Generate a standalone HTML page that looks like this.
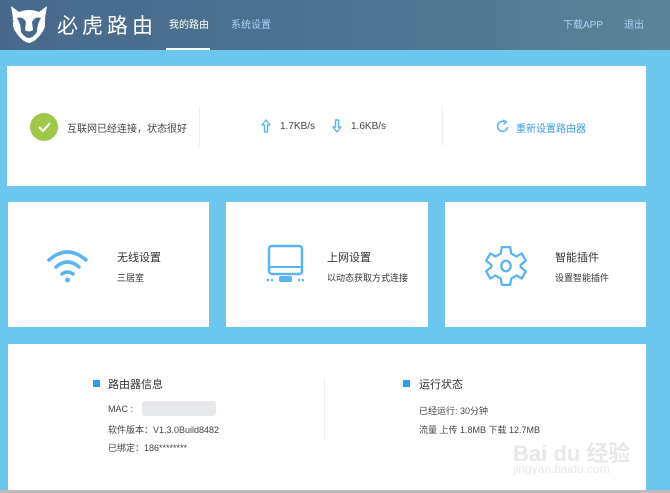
<!DOCTYPE html>
<html><head><meta charset="utf-8"><style>
*{margin:0;padding:0;box-sizing:border-box}
body{width:670px;height:493px;background:#6cc6ee;font-family:"Liberation Sans","Noto Sans CJK SC",sans-serif;position:relative;overflow:hidden;color:#333}
.hdr{position:absolute;left:0;top:0;width:670px;height:50px;background:linear-gradient(90deg,#48698c,#4f7590 60%,#5a8496)}
.p{position:absolute;background:#fff}
.t{position:absolute;white-space:nowrap}
</style></head><body>
<div class="hdr">
<svg style="position:absolute;left:7px;top:4px" width="44" height="40" viewBox="0 0 44 40">
<path d="M4 2 L12 8 Q22 4 32 8 L40 2 L38 14 Q40 22 34 30 Q28 38 22 39 Q16 38 10 30 Q4 22 6 14 Z" fill="#fff"/>
<path d="M10 14 Q16 12 19 18 L18 26 Q22 29 26 26 L25 18 Q28 12 34 14 Q30 20 30 28 Q26 34 22 34 Q18 34 14 28 Q14 20 10 14Z" fill="#48698c"/>
<path d="M5 16 Q2 28 12 38" stroke="#48698c" stroke-width="3" fill="none"/>
<path d="M39 16 Q42 28 32 38" stroke="#48698c" stroke-width="3" fill="none"/>
</svg>
<div class="t" style="left:57px;top:10px;font-size:21px;color:#fff;letter-spacing:4px">必虎路由</div>
<div class="t" style="left:169px;top:16px;font-size:10px;color:#fff">我的路由</div>
<div style="position:absolute;left:166px;top:48px;width:44px;height:2px;background:#fff"></div>
<div class="t" style="left:231px;top:16px;font-size:10px;color:#a9d3f5">系统设置</div>
<div class="t" style="left:563px;top:16px;font-size:10px;color:#a9d3f5">下载APP</div>
<div class="t" style="left:624px;top:16px;font-size:10px;color:#a9d3f5">退出</div>
</div>
<div class="p" style="left:7px;top:66px;width:639px;height:120px">
<div style="position:absolute;left:23px;top:47px;width:28px;height:28px;border-radius:50%;background:#9dc84a"></div>
<svg style="position:absolute;left:23px;top:47px" width="28" height="28"><path d="M9 14 L13 18 L20 10" stroke="#fff" stroke-width="2" fill="none"/></svg>
<div class="t" style="left:60px;top:54px;font-size:10px;color:#444">互联网已经连接，状态很好</div>
<div style="position:absolute;left:192px;top:40px;width:1px;height:40px;background:#eee"></div>
<div style="position:absolute;left:435px;top:40px;width:1px;height:40px;background:#eee"></div>
<svg style="position:absolute;left:254px;top:53px" width="10" height="14" viewBox="0 0 10 14"><path d="M5 1 L9 6 H6.5 V13 H3.5 V6 H1 Z" stroke="#5ab5ef" stroke-width="1.4" fill="none" stroke-linejoin="round"/></svg>
<div class="t" style="left:273px;top:55px;font-size:10px;color:#444">1.7KB/s</div>
<svg style="position:absolute;left:325px;top:53px" width="10" height="14" viewBox="0 0 10 14"><path d="M5 13 L9 8 H6.5 V1 H3.5 V8 H1 Z" stroke="#5ab5ef" stroke-width="1.4" fill="none" stroke-linejoin="round"/></svg>
<div class="t" style="left:344px;top:55px;font-size:10px;color:#444">1.6KB/s</div>
<svg style="position:absolute;left:489px;top:53px" width="13" height="14" viewBox="0 0 13 14"><path d="M9 3 A5 5 0 1 0 11.5 8" stroke="#5ab5ef" stroke-width="1.6" fill="none"/><path d="M7 1 L10.5 3 L7.5 5.5" stroke="#5ab5ef" stroke-width="1.4" fill="none"/></svg>
<div class="t" style="left:509px;top:54px;font-size:10px;color:#3a9be3">重新设置路由器</div>
</div>
<div class="p" style="left:8px;top:202px;width:201px;height:125px">
<svg style="position:absolute;left:38px;top:45px" width="43" height="36" viewBox="0 0 43 36"><g stroke="#5ab5ef" stroke-width="3.5" fill="none" stroke-linecap="round"><path d="M3 13 Q21.5 -3 40 13"/><path d="M10 20 Q21.5 10 33 20"/><path d="M16 27 Q21.5 23 27 27"/></g><circle cx="21.5" cy="33" r="2.5" fill="#5ab5ef"/></svg>
<div class="t" style="left:109px;top:47px;font-size:11px;color:#333">无线设置</div>
<div class="t" style="left:109px;top:69px;font-size:9px;color:#333">三居室</div>
</div>
<div class="p" style="left:226px;top:202px;width:202px;height:125px">
<svg style="position:absolute;left:40px;top:42px" width="40" height="42" viewBox="0 0 40 42"><rect x="3" y="2" width="33" height="28" rx="3" stroke="#5ab5ef" stroke-width="2.5" fill="none"/><line x1="4" y1="23" x2="35" y2="23" stroke="#5ab5ef" stroke-width="2"/><rect x="13" y="32" width="13" height="6" rx="2" fill="#5ab5ef"/><g fill="#5ab5ef"><circle cx="2" cy="36" r="1.3"/><circle cx="6" cy="36" r="1.3"/><circle cx="33" cy="36" r="1.3"/><circle cx="37" cy="36" r="1.3"/></g></svg>
<div class="t" style="left:101px;top:47px;font-size:11px;color:#333">上网设置</div>
<div class="t" style="left:101px;top:69px;font-size:9px;color:#333">以动态获取方式连接</div>
</div>
<div class="p" style="left:445px;top:202px;width:201px;height:125px">
<svg style="position:absolute;left:40px;top:42px" width="42" height="44" viewBox="0 0 40 42"><path d="M16 3 H24 L25 9 L30 12 L35 9 L39 16 L34 20 V22 L39 26 L35 33 L30 30 L25 33 L24 39 H16 L15 33 L10 30 L5 33 L1 26 L6 22 V20 L1 16 L5 9 L10 12 L15 9 Z" stroke="#5ab5ef" stroke-width="2.2" fill="none" stroke-linejoin="round"/><ellipse cx="20" cy="21" rx="4.5" ry="5" stroke="#5ab5ef" stroke-width="2.2" fill="none"/></svg>
<div class="t" style="left:110px;top:47px;font-size:11px;color:#333">智能插件</div>
<div class="t" style="left:110px;top:69px;font-size:9px;color:#333">设置智能插件</div>
</div>
<div class="p" style="left:8px;top:344px;width:638px;height:146px">
<div style="position:absolute;left:85px;top:36px;width:7px;height:7px;background:#2a9ee8"></div>
<div class="t" style="left:100px;top:32px;font-size:11px;color:#333">路由器信息</div>
<div class="t" style="left:100px;top:60px;font-size:9px;color:#444">MAC :</div>
<div style="position:absolute;left:134px;top:57px;width:74px;height:15px;background:#e6e8ec;border-radius:3px"></div>
<div class="t" style="left:100px;top:79px;font-size:9px;color:#444">软件版本：V1.3.0Build8482</div>
<div class="t" style="left:100px;top:97px;font-size:9px;color:#444">已绑定：186********</div>
<div style="position:absolute;left:316px;top:35px;width:1px;height:62px;background:#eee"></div>
<div style="position:absolute;left:395px;top:36px;width:7px;height:7px;background:#2a9ee8"></div>
<div class="t" style="left:411px;top:32px;font-size:11px;color:#333">运行状态</div>
<div class="t" style="left:411px;top:60px;font-size:9px;color:#444">已经运行: 30分钟</div>
<div class="t" style="left:411px;top:79px;font-size:9px;color:#444">流量 上传 1.8MB 下载 12.7MB</div>
<div class="t" style="left:505px;top:92px;font-size:22px;color:#e8e8e8;font-weight:bold">Bai du 经验</div>
<div class="t" style="left:505px;top:118px;font-size:12px;color:#e8e8e8">jingyan.baidu.com</div>
</div>
<div style="position:absolute;left:0;top:490px;width:670px;height:3px;background:#bbb"></div>
</body></html>
